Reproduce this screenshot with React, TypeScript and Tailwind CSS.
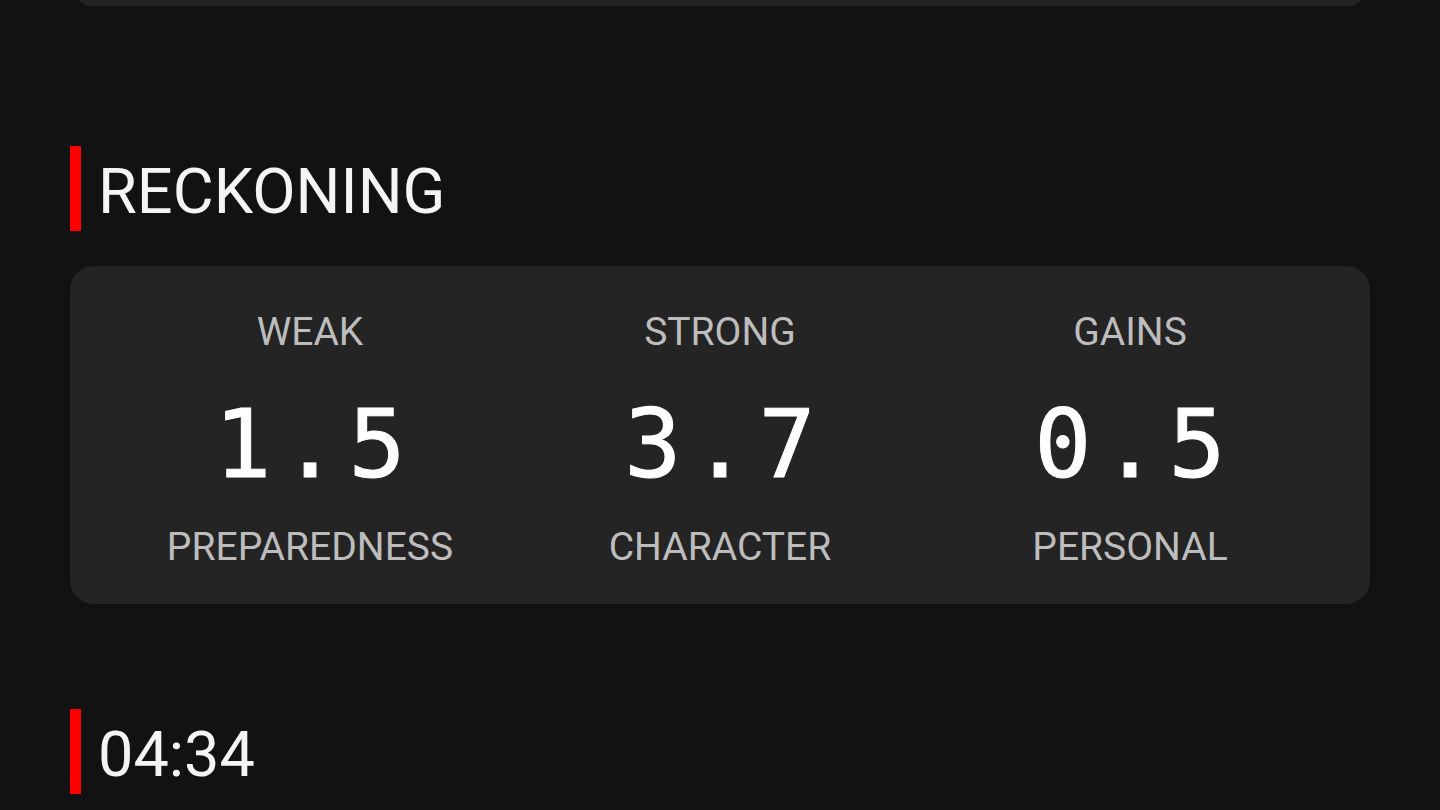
import React from 'react';

interface Stat {
  top: string;
  value: string;
  bottom: string;
}

const stats: Stat[] = [
  { top: 'WEAK', value: '1.5', bottom: 'PREPAREDNESS' },
  { top: 'STRONG', value: '3.7', bottom: 'CHARACTER' },
  { top: 'GAINS', value: '0.5', bottom: 'PERSONAL' },
];

const SectionTitle = ({ title, className }: { title: string; className?: string }) => {
  return (
    <div className={`flex items-start gap-[17px] ${className ?? ''}`}>
      <div className="h-[85px] w-[11px] shrink-0 bg-[#ff0000]" />
      <h2 className="mt-[10px] text-[63px] leading-[72px] font-normal text-[#f6f3f3] [font-family:Roboto,'Noto_Sans',sans-serif]">
        {title}
      </h2>
    </div>
  );
};

const App = () => {
  return (
    <div className="min-h-screen w-full overflow-hidden bg-[#121212] px-[70px] [font-family:Roboto,'Noto_Sans',sans-serif]">
      {/* previous card, scrolled mostly off screen */}
      <div className="-mt-[94px] h-[100px] rounded-3xl border-b border-[#2b2b2b] bg-[#242424]" />

      <SectionTitle title="RECKONING" className="mt-[140px]" />

      {/* reckoning card */}
      <div className="mt-[35px] grid grid-cols-3 rounded-3xl bg-[#242424] px-[35px] pt-[44px] pb-[35px]">
        {stats.map((s) => (
          <div key={s.top} className="flex flex-col items-center">
            <span className="text-[39px] leading-[44px] text-[#bdbdbd]">{s.top}</span>
            <span className="mt-[40px] pl-[10px] text-[95px] leading-[100px] tracking-[10px] text-white [font-family:'DejaVu_Sans_Mono',monospace] [-webkit-text-stroke:1px_white]">
              {s.value}
            </span>
            <span className="mt-[31px] text-[39px] leading-[44px] text-[#bdbdbd]">{s.bottom}</span>
          </div>
        ))}
      </div>

      <SectionTitle title="04:34" className="mt-[105px]" />
    </div>
  );
};

export default App;
